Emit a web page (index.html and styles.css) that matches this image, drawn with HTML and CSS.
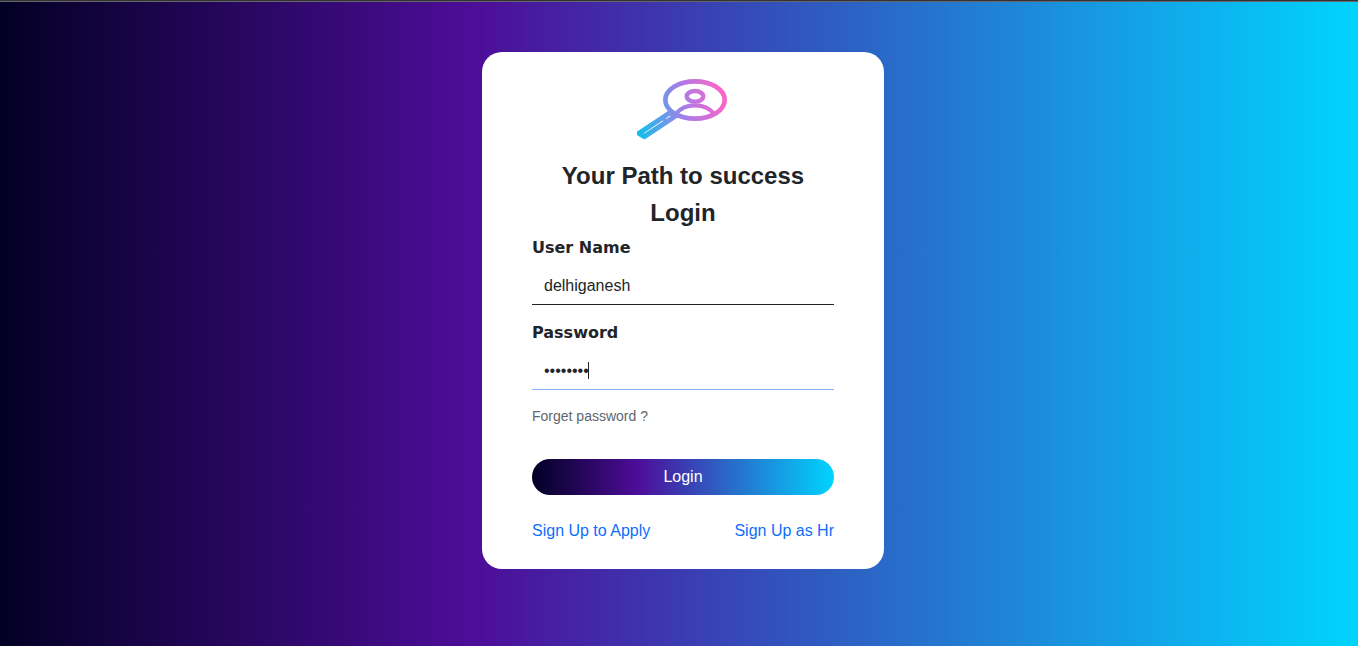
FILE: index.html
```html
<!DOCTYPE html>
<html lang="en">
<head>
<meta charset="utf-8">
<meta name="viewport" content="width=device-width, initial-scale=1">
<title>Login</title>
<link rel="stylesheet" href="styles.css">
</head>
<body class="page">
<main class="card">
  <svg class="logo" viewBox="21 24 276 186" aria-hidden="true">
    <defs>
      <linearGradient id="brand" gradientUnits="userSpaceOnUse" x1="20" y1="180" x2="285" y2="120">
        <stop offset="0" stop-color="#10c0e8"/>
        <stop offset="0.35" stop-color="#6e98ea"/>
        <stop offset="0.6" stop-color="#b07ae6"/>
        <stop offset="1" stop-color="#fa66c8"/>
      </linearGradient>
    </defs>
    <g fill="none" stroke="url(#brand)">
      <ellipse cx="195" cy="90" rx="89" ry="56" stroke-width="14"/>
      <ellipse cx="195" cy="79" rx="25" ry="16" stroke-width="13"/>
      <path d="M138 131C166 98 224 98 252 131" stroke-width="13"/>
      <path d="M27 190L118 129L139 136L43 200Z" stroke-width="15" stroke-linejoin="round"/>
      <path d="M95 144L112 153" stroke-width="10"/>
    </g>
  </svg>
  <h1 class="title">Your Path to success</h1>
  <h2 class="title">Login</h2>
  <form class="form">
    <label class="label" for="user">User Name</label>
    <input class="input" id="user" type="text" value="delhiganesh">
    <label class="label" for="password">Password</label>
    <div class="field">
      <input class="input input-active" id="password" type="password" value="password">
      <span class="caret"></span>
    </div>
    <a class="forgot" href="#">Forget password ?</a>
    <button class="submit" type="button">Login</button>
    <nav class="links">
      <a class="link" href="#">Sign Up to Apply</a>
      <a class="link" href="#">Sign Up as Hr</a>
    </nav>
  </form>
</main>
</body>
</html>
```
FILE: styles.css
```css
* {
  box-sizing: border-box;
}

:root {
  --sweep: linear-gradient(90deg, #020024 0%, #4d0d99 35%, #00d4ff 100%);
}

.page {
  margin: 0;
  min-height: 100vh;
  padding: 51px 0 50px 8px;
  border-top: 1px solid #333336;
  box-shadow: inset 0 1px 0 #66666a;
  background: var(--sweep);
  color: #212529;
  font: 16px/24px "Liberation Sans", Arial, sans-serif;
}

.card {
  display: flex;
  flex-direction: column;
  align-items: center;
  max-width: 402px;
  margin: 0 auto;
  padding: 26px 50px;
  border-radius: 20px;
  background: #fff;
}

.logo {
  width: 92px;
  height: 62px;
  margin-bottom: 18px;
}

.title {
  margin: 0;
  padding-bottom: 1px;
  font-size: 24px;
  line-height: 36px;
  font-weight: 700;
  text-align: center;
}

.form {
  display: flex;
  flex-direction: column;
  align-self: stretch;
  margin-top: 4px;
}

.label {
  margin-bottom: 7px;
  font-family: "Arial Black", "DejaVu Sans", sans-serif;
  font-weight: 900;
}

.input {
  width: 100%;
  height: 38px;
  margin: 0 0 16px;
  padding: 6px 12px;
  border: 0;
  border-bottom: 1px solid #212529;
  border-radius: 0;
  outline: 0;
  background: transparent;
  color: #212529;
  font: inherit;
}

.input-active {
  border-color: #86b7fe;
}

.field {
  position: relative;
}

.caret {
  position: absolute;
  top: 10px;
  left: 56px;
  width: 1px;
  height: 17px;
  background: #212529;
}

.forgot {
  align-self: flex-start;
  margin-bottom: 32px;
  color: #5f666d;
  font-size: 14px;
  line-height: 21px;
  text-decoration: none;
}

.submit {
  height: 36px;
  margin-bottom: 24px;
  padding: 0;
  border: 0;
  border-radius: 18px;
  background: var(--sweep);
  color: #fff;
  font: inherit;
}

.links {
  display: flex;
  justify-content: space-between;
}

.link {
  color: #0d6efd;
  text-decoration: none;
}
```
